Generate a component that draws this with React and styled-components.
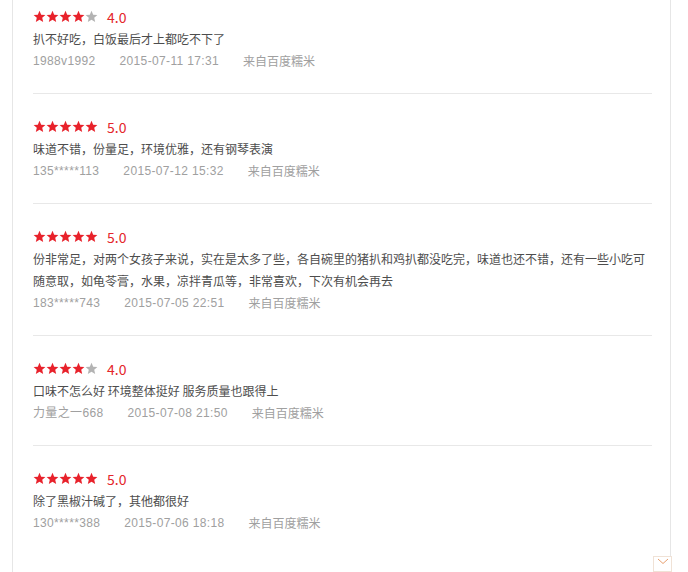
import React from "react";
import styled, { createGlobalStyle } from "styled-components";

const reviews = [
  { score: 4, text: "扒不好吃，白饭最后才上都吃不下了", user: "1988v1992", time: "2015-07-11 17:31" },
  { score: 5, text: "味道不错，份量足，环境优雅，还有钢琴表演", user: "135*****113", time: "2015-07-12 15:32" },
  {
    score: 5,
    text: "份非常足，对两个女孩子来说，实在是太多了些，各自碗里的猪扒和鸡扒都没吃完，味道也还不错，还有一些小吃可随意取，如龟苓膏，水果，凉拌青瓜等，非常喜欢，下次有机会再去",
    user: "183*****743",
    time: "2015-07-05 22:51",
  },
  { score: 4, text: "口味不怎么好 环境整体挺好 服务质量也跟得上", user: "力量之一668", time: "2015-07-08 21:50" },
  { score: 5, text: "除了黑椒汁碱了，其他都很好", user: "130*****388", time: "2015-07-06 18:18" },
];

const GlobalStyle = createGlobalStyle`
  body {
    margin: 0;
    background: #fff;
    font-family: "Liberation Sans", "Noto Sans CJK SC", sans-serif;
    overflow: hidden;
  }
`;

const Card = styled.div`
  box-sizing: border-box;
  width: 659px;
  height: 588px;
  margin: -16px 0 0 12px;
  border-left: 1px solid #e6e6e6;
  border-right: 1px solid #e6e6e6;
  padding: 0 18px 0 20px;
  position: relative;
`;

const Item = styled.div`
  padding: 21px 0;
  border-bottom: 1px solid ${(p) => (p.$last ? "transparent" : "#e8e8e8")};
`;

const StarRow = styled.div`
  display: flex;
  align-items: center;
  height: 23px;
`;

const Stars = styled.div`
  display: flex;
`;

const Score = styled.span`
  margin-left: 9px;
  font-size: 14px;
  color: #e4262b;
  font-family: "Noto Sans CJK SC", "Liberation Sans", sans-serif;
`;

const Comment = styled.p`
  margin: 0;
  font-size: 12px;
  line-height: 22px;
  color: #4d4d4d;
  font-family: "Noto Sans CJK SC", sans-serif;
`;

const Meta = styled.div`
  display: flex;
  gap: 24px;
  font-size: 12px;
  line-height: 22px;
  color: #a0a0a0;
  letter-spacing: 0.35px;
`;

const Source = styled.span`
  font-family: "Noto Sans CJK SC", sans-serif;
  letter-spacing: 0;
`;

const MoreButton = styled.div`
  position: absolute;
  right: -2px;
  top: 572px;
  width: 17px;
  height: 14px;
  border: 1px solid #f0e2d6;
  background: #fff;
  display: flex;
  justify-content: center;
`;

const Star = ({ on }) => (
  <svg width="13" height="13" viewBox="0 0 24 24">
    <path
      d="M12 1.5l3.1 7.2 7.8.6-5.9 5.1 1.8 7.6L12 18l-6.8 4 1.8-7.6-5.9-5.1 7.8-.6z"
      fill={on ? "#e8222b" : "#b3b3b3"}
    />
  </svg>
);

export default function App() {
  return (
    <>
      <GlobalStyle />
      <Card>
        {reviews.map((r, i) => (
          <Item key={i} $last={i === reviews.length - 1}>
            <StarRow>
              <Stars>
                {[0, 1, 2, 3, 4].map((n) => (
                  <Star key={n} on={n < r.score} />
                ))}
              </Stars>
              <Score>{r.score}.0</Score>
            </StarRow>
            <Comment>{r.text}</Comment>
            <Meta>
              <span>{r.user}</span>
              <span>{r.time}</span>
              <Source>来自百度糯米</Source>
            </Meta>
          </Item>
        ))}
        <MoreButton>
          <svg width="12" height="8" viewBox="0 0 12 8">
            <path d="M1 2l5 4.5L11 2" fill="none" stroke="#e8a070" strokeWidth="1" />
          </svg>
        </MoreButton>
      </Card>
    </>
  );
}
